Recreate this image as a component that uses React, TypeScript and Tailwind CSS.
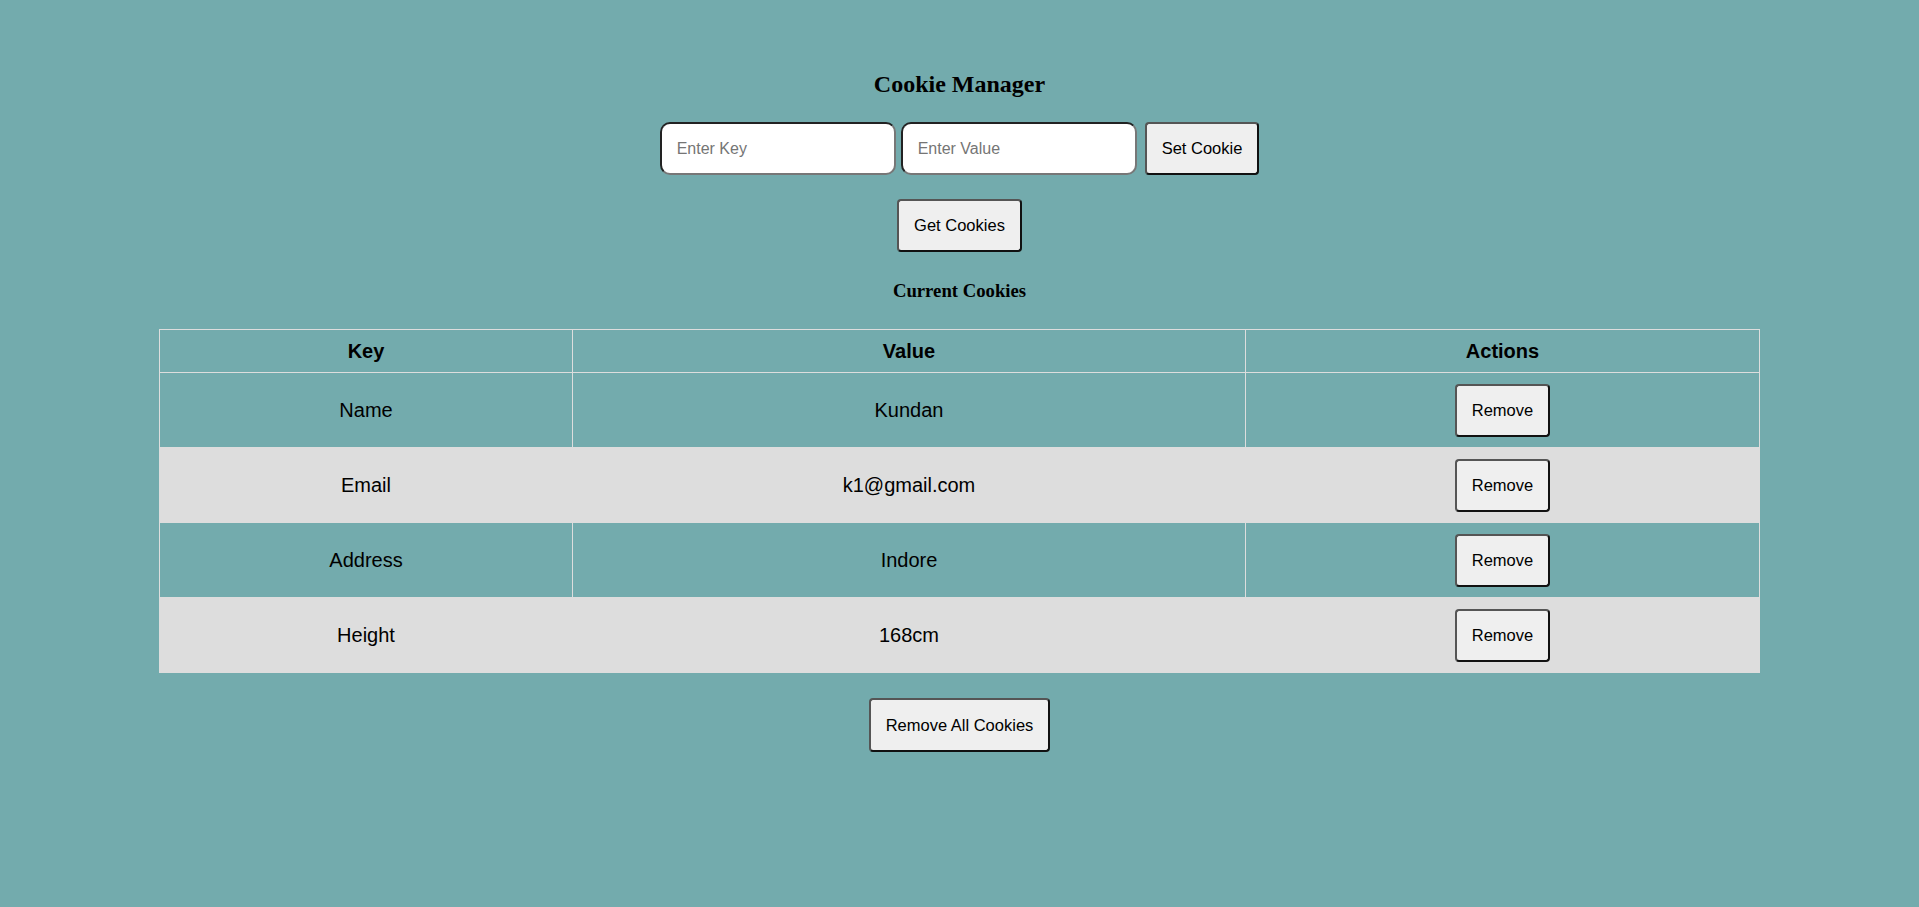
import { useState } from "react";

type Cookie = { key: string; value: string };

const INITIAL: Cookie[] = [
  { key: "Name", value: "Kundan" },
  { key: "Email", value: "k1@gmail.com" },
  { key: "Address", value: "Indore" },
  { key: "Height", value: "168cm" },
];

// 既定ボタン風（outset っぽい 2px 枠）
const btn =
  "h-[53px] px-[15px] text-[16.5px] leading-[19px] text-black bg-[#efefef] border-2 border-t-[#555] border-l-[#555] border-r-[#111] border-b-[#111] rounded-[4px]";

const input =
  "w-[236px] h-[53px] px-[15px] text-[16px] text-black bg-white border-2 rounded-[10px] border-t-[#222] border-l-[#222] border-b-[#777] border-r-[#777] placeholder:text-[#757575] outline-none";

export default function App() {
  const [cookies, setCookies] = useState<Cookie[]>(INITIAL);
  const [key, setKey] = useState("");
  const [value, setValue] = useState("");

  const add = () => {
    if (!key) return;
    setCookies((c) => [...c.filter((x) => x.key !== key), { key, value }]);
    setKey("");
    setValue("");
  };

  return (
    <div className="min-h-[907px] bg-[#73abad] font-['Liberation_Sans',Arial,sans-serif] text-black flex flex-col items-center pt-[70px]">
      <h2 className="font-['Liberation_Serif','Times_New_Roman',serif] font-bold text-[24px] leading-[28px]">
        Cookie Manager
      </h2>

      <div className="mt-[24px] flex gap-[5px]">
        <input
          className={input}
          placeholder="Enter Key"
          value={key}
          onChange={(e) => setKey(e.target.value)}
        />
        <input
          className={input}
          placeholder="Enter Value"
          value={value}
          onChange={(e) => setValue(e.target.value)}
        />
        <button className={`${btn} ml-[3px]`} onClick={add}>
          Set Cookie
        </button>
      </div>

      <button className={`${btn} mt-[24px]`}>Get Cookies</button>

      <h3 className="mt-[28px] font-['Liberation_Serif','Times_New_Roman',serif] font-bold text-[18.72px] leading-[21px]">
        Current Cookies
      </h3>

      <table className="mt-[28px] w-[1600px] table-fixed border-collapse text-[20px]">
        <colgroup>
          <col className="w-[413px]" />
          <col className="w-[673px]" />
          <col className="w-[514px]" />
        </colgroup>
        <thead>
          <tr>
            <th className="border border-[#ddd] h-[43px] font-bold">Key</th>
            <th className="border border-[#ddd] h-[43px] font-bold">Value</th>
            <th className="border border-[#ddd] h-[43px] font-bold">Actions</th>
          </tr>
        </thead>
        <tbody>
          {cookies.map((c, i) => (
            <tr key={c.key} className={i % 2 === 1 ? "bg-[#dddddd]" : ""}>
              <td className="border border-[#ddd] h-[75px] text-center align-middle">{c.key}</td>
              <td className="border border-[#ddd] h-[75px] text-center align-middle">{c.value}</td>
              <td className="border border-[#ddd] h-[75px] text-center align-middle">
                <button
                  className={btn}
                  onClick={() => setCookies((all) => all.filter((x) => x.key !== c.key))}
                >
                  Remove
                </button>
              </td>
            </tr>
          ))}
        </tbody>
      </table>

      <button className={`${btn} mt-[25px] h-[54px]`} onClick={() => setCookies([])}>
        Remove All Cookies
      </button>
    </div>
  );
}
